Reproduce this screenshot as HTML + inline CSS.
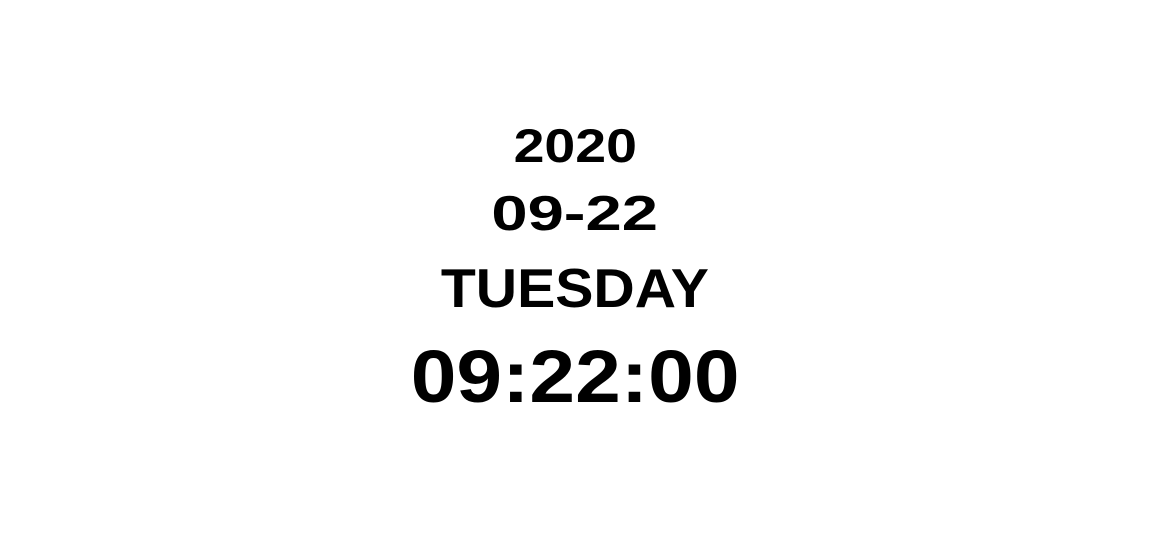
<!DOCTYPE html>
<html><head><meta charset="utf-8"><style>
html,body{margin:0;padding:0;background:#fff;width:1150px;height:534px;overflow:hidden}
.t{position:absolute;left:0;width:1150px;text-align:center;font-family:"Liberation Sans",sans-serif;font-weight:bold;color:#000;line-height:1em}
.t span{display:inline-block}
</style></head><body>
<div class="t" style="top:122px;font-size:47px"><span style="transform:scaleX(1.18)">2020</span></div>
<div class="t" style="top:190px;font-size:49px"><span style="transform:scaleX(1.33)">09-22</span></div>
<div class="t" style="top:261px;font-size:55px"><span style="transform:scaleX(1.04)">TUESDAY</span></div>
<div class="t" style="top:340px;font-size:74px"><span style="transform:scaleX(1.11)">09:22:00</span></div>
</body></html>
